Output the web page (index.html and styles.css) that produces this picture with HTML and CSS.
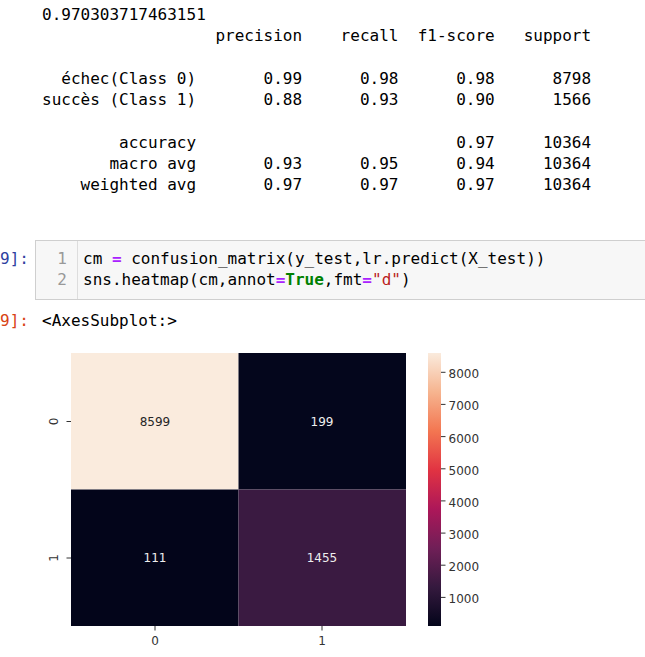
FILE: index.html
```html
<!DOCTYPE html>
<html lang="fr">
<head>
<meta charset="utf-8">
<title>Notebook</title>
<link rel="stylesheet" href="styles.css">
</head>
<body>
<div class="cell out-first">
  <div class="prompt"></div>
  <div class="output">
<pre class="stream">0.970303717463151
                  precision    recall  f1-score   support

  échec(Class 0)       0.99      0.98      0.98      8798
succès (Class 1)       0.88      0.93      0.90      1566

        accuracy                           0.97     10364
       macro avg       0.93      0.95      0.94     10364
    weighted avg       0.97      0.97      0.97     10364</pre>
  </div>
</div>

<div class="cell in-cell">
  <div class="prompt in-prompt"><span>9]:</span></div>
  <div class="editor">
    <div class="gutter"><div>1</div><div>2</div></div>
    <div class="code"><div class="cl">cm <span class="op">=</span> confusion_matrix(y_test,lr.predict(X_test))</div><div class="cl">sns.heatmap(cm,annot<span class="op">=</span><span class="kw">True</span>,fmt<span class="op">=</span><span class="str">"d"</span>)</div></div>
  </div>
</div>

<div class="cell out-cell">
  <div class="prompt out-prompt"><span>9]:</span></div>
  <div class="output">
    <div class="result">&lt;AxesSubplot:&gt;</div>
    <svg class="figure" width="603" height="326" viewBox="0 0 603 326" xmlns="http://www.w3.org/2000/svg">
      <defs>
        <linearGradient id="rocket" x1="0" y1="1" x2="0" y2="0">
          <stop offset="0" stop-color="#03051A"/>
          <stop offset="0.143" stop-color="#35193E"/>
          <stop offset="0.286" stop-color="#701F57"/>
          <stop offset="0.429" stop-color="#AD1759"/>
          <stop offset="0.571" stop-color="#E13342"/>
          <stop offset="0.714" stop-color="#F37651"/>
          <stop offset="0.857" stop-color="#F6B48F"/>
          <stop offset="1" stop-color="#FAEBDD"/>
        </linearGradient>
      </defs>
      <g transform="translate(-42,-331)">
        <rect x="71" y="353" width="167.5" height="136.5" fill="#FAEBDD"/>
        <rect x="238.5" y="353" width="167.5" height="136.5" fill="#04061C"/>
        <rect x="71" y="489.5" width="167.5" height="136.5" fill="#03051A"/>
        <rect x="238.5" y="489.5" width="167.5" height="136.5" fill="#3A1A41"/>
        <g font-family="DejaVu Sans, sans-serif" font-size="12" text-anchor="middle" dominant-baseline="central">
          <text x="155" y="422" fill="#262626">8599</text>
          <text x="322" y="422" fill="#eeeeee">199</text>
          <text x="155" y="558" fill="#eeeeee">111</text>
          <text x="322" y="558" fill="#eeeeee">1455</text>
        </g>
        <g stroke="#333" stroke-width="1">
          <line x1="66.5" y1="421.5" x2="71" y2="421.5"/>
          <line x1="66.5" y1="558" x2="71" y2="558"/>
          <line x1="155" y1="626" x2="155" y2="630.5"/>
          <line x1="322" y1="626" x2="322" y2="630.5"/>
        </g>
        <g font-family="DejaVu Sans, sans-serif" font-size="12" fill="#333" text-anchor="middle" dominant-baseline="central">
          <text x="54" y="421.5" transform="rotate(-90 54 421.5)">0</text>
          <text x="54" y="558" transform="rotate(-90 54 558)">1</text>
          <text x="155" y="641">0</text>
          <text x="322" y="641">1</text>
        </g>
        <rect x="428" y="353" width="13" height="273" fill="url(#rocket)"/>
        <g stroke="#333" stroke-width="1">
          <line x1="441" y1="372.3" x2="445.5" y2="372.3"/>
          <line x1="441" y1="404.4" x2="445.5" y2="404.4"/>
          <line x1="441" y1="436.6" x2="445.5" y2="436.6"/>
          <line x1="441" y1="468.8" x2="445.5" y2="468.8"/>
          <line x1="441" y1="500.9" x2="445.5" y2="500.9"/>
          <line x1="441" y1="533.1" x2="445.5" y2="533.1"/>
          <line x1="441" y1="565.2" x2="445.5" y2="565.2"/>
          <line x1="441" y1="597.4" x2="445.5" y2="597.4"/>
        </g>
        <g font-family="DejaVu Sans, sans-serif" font-size="12" fill="#333" dominant-baseline="central">
          <text x="448.5" y="374">8000</text>
          <text x="448.5" y="406">7000</text>
          <text x="448.5" y="438.5">6000</text>
          <text x="448.5" y="470.5">5000</text>
          <text x="448.5" y="502.5">4000</text>
          <text x="448.5" y="534.5">3000</text>
          <text x="448.5" y="566.5">2000</text>
          <text x="448.5" y="598.5">1000</text>
        </g>
      </g>
    </svg>
  </div>
</div>
</body>
</html>
```

FILE: styles.css
```css
html, body {
  margin: 0;
  padding: 0;
  background: #ffffff;
  overflow: hidden;
}

body {
  width: 645px;
  height: 657px;
  font-family: "DejaVu Sans Mono", "Liberation Mono", monospace;
  font-size: 16px;
  line-height: 21.25px;
  color: #000000;
}

.cell {
  display: flex;
  align-items: flex-start;
}

.prompt {
  flex: none;
  width: 35px;
  box-sizing: border-box;
  padding-right: 6px;
  display: flex;
  justify-content: flex-end;
  white-space: pre;
}

.output {
  flex: 1;
  min-width: 0;
  padding-left: 7px;
}

.out-first {
  padding-top: 4px;
}

.stream {
  margin: 0;
  font: inherit;
  line-height: 21.3px;
  white-space: pre;
}

.in-cell {
  margin-top: 44.5px;
}

.in-prompt {
  color: #303F9F;
  padding-top: 8px;
}

.editor {
  flex: 1;
  display: flex;
  margin-right: -30px;
  background: #f7f7f7;
  border: 1px solid #cfcfcf;
  padding: 7px 0 8px 0;
}

.gutter {
  flex: none;
  width: 42px;
  box-sizing: border-box;
  padding-right: 10px;
  text-align: right;
  color: #999999;
  border-right: 1px solid #dddddd;
  margin-top: -7px;
  margin-bottom: -8px;
  padding-top: 7px;
  padding-bottom: 8px;
}

.code {
  padding-left: 5px;
  white-space: pre;
}

.op {
  color: #AA22FF;
  font-weight: bold;
}

.kw {
  color: #008000;
  font-weight: bold;
}

.str {
  color: #BA2121;
}

.out-cell {
  margin-top: 10px;
}

.out-prompt {
  color: #D84315;
}

.result {
  white-space: pre;
}

.figure {
  display: block;
}
```
